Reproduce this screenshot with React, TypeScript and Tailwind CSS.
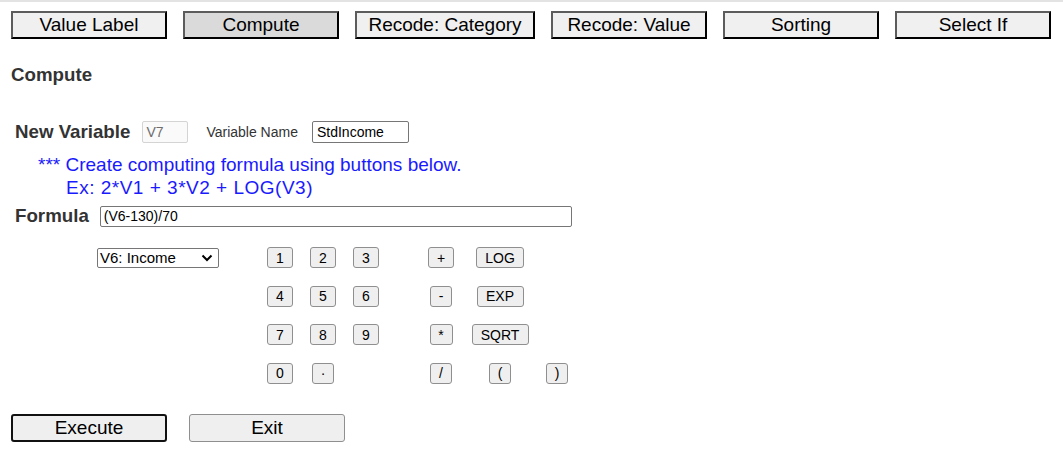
import React from "react";

const tabs = ["Value Label", "Compute", "Recode: Category", "Recode: Value", "Sorting", "Select If"];

function Key({ label, w }: { label: string; w: string }) {
  return (
    <button
      className={`${w} h-[21px] border border-[#8f8f8f] bg-[#efefef] rounded-[3px] text-[14px] leading-none text-black flex items-center justify-center`}
    >
      {label}
    </button>
  );
}

export default function App() {
  const rows: { label: string; w: string }[][] = [
    [
      { label: "1", w: "w-[26px]" },
      { label: "2", w: "w-[26px]" },
      { label: "3", w: "w-[26px]" },
      { label: "+", w: "w-[26px]" },
      { label: "LOG", w: "w-[48px]" },
      { label: "", w: "" },
    ],
    [
      { label: "4", w: "w-[26px]" },
      { label: "5", w: "w-[26px]" },
      { label: "6", w: "w-[26px]" },
      { label: "-", w: "w-[22px]" },
      { label: "EXP", w: "w-[47px]" },
      { label: "", w: "" },
    ],
    [
      { label: "7", w: "w-[26px]" },
      { label: "8", w: "w-[26px]" },
      { label: "9", w: "w-[26px]" },
      { label: "*", w: "w-[23px]" },
      { label: "SQRT", w: "w-[57px]" },
      { label: "", w: "" },
    ],
    [
      { label: "0", w: "w-[26px]" },
      { label: "·", w: "w-[22px]" },
      { label: "", w: "" },
      { label: "/", w: "w-[22px]" },
      { label: "(", w: "w-[22px]" },
      { label: ")", w: "w-[22px]" },
    ],
  ];

  return (
    <div className="w-[1063px] h-[452px] bg-white text-black font-['Liberation_Sans',Arial,sans-serif] overflow-hidden">
      <div className="h-[2px] bg-[#e3e3e3]" />
      <div className="flex gap-4 pl-[11px] pt-[9px]">
        {tabs.map((t) => (
          <button
            key={t}
            className={`${t === "Recode: Category" ? "w-[180px]" : "w-[156px]"} h-[28px] border-2 border-t-[#5c5c5c] border-l-[#5c5c5c] border-r-black border-b-black ${
              t === "Compute" ? "bg-[#dadada]" : "bg-[#f0f0f0]"
            } text-[19px] leading-none text-black flex items-center justify-center pb-[1px]`}
          >
            {t}
          </button>
        ))}
      </div>

      <h3 className="mt-[25px] pl-[11px] text-[18.72px] leading-[22px] font-bold text-[#333]">Compute</h3>

      <div className="mt-[35px] pl-[15px] flex items-center h-[22px]">
        <span className="text-[18.72px] font-bold text-[#333]">New Variable</span>
        <div className="ml-[12px] w-[46px] h-[22px] border border-[#d4d4d4] bg-[#fafafa] rounded-[2px] text-[14px] text-[#6d6d6d] flex items-center pl-[3px]">
          V7
        </div>
        <span className="ml-[18px] text-[14px] text-[#333]">Variable Name</span>
        <div className="ml-[14px] w-[97px] h-[22px] border border-[#767676] rounded-[2px] text-[14px] text-black flex items-center pl-[4px]">
          StdIncome
        </div>
      </div>

      <div className="mt-[10px] pl-[38px] text-[19px] leading-[23px] text-[#1a1aff]">
        *** Create computing formula using buttons below.
      </div>
      <div className="pl-[66px] text-[19px] leading-[23px] tracking-[0.5px] text-[#1a1aff]">Ex: 2*V1 + 3*V2 + LOG(V3)</div>

      <div className="mt-[6px] pl-[15px] flex items-center h-[22px]">
        <span className="text-[18.72px] font-bold text-[#333]">Formula</span>
        <div className="ml-[11px] w-[472px] h-[21px] border border-[#767676] rounded-[2px] text-[14px] text-black flex items-center pl-[3px]">
          (V6-130)/70
        </div>
      </div>

      <div className="mt-[20px] pl-[97px] flex items-start">
        <div className="w-[161px] pt-[1px]">
          <div className="w-[122px] h-[20px] border border-[#767676] rounded-[2px] flex items-center justify-between pl-[2px] pr-[5px] text-[15px] text-black">
            <span>V6: Income</span>
            <svg width="12" height="8" viewBox="0 0 12 8">
              <path d="M1.5 1.5 L6 6 L10.5 1.5" fill="none" stroke="black" strokeWidth="2" />
            </svg>
          </div>
        </div>
        <div className="grid grid-cols-[44px_42px_44px_24px_58px_60px_54px] gap-y-[17.5px]">
          {rows.map((r, i) => (
            <React.Fragment key={i}>
              {r.slice(0, 3).map((k, j) => (
                <div key={j} className="flex justify-center">
                  {k.label ? <Key label={k.label} w={k.w} /> : null}
                </div>
              ))}
              <div />
              {r.slice(3).map((k, j) => (
                <div key={j + 3} className="flex justify-center">
                  {k.label ? <Key label={k.label} w={k.w} /> : null}
                </div>
              ))}
            </React.Fragment>
          ))}
        </div>
      </div>

      <div className="mt-[30px] pl-[11px] flex gap-[22px]">
        <button className="w-[156px] h-[28px] border-2 border-[#111] rounded-[3px] bg-[#efefef] text-[19px] leading-none text-black flex items-center justify-center">
          Execute
        </button>
        <button className="w-[156px] h-[28px] border border-[#8f8f8f] rounded-[3px] bg-[#efefef] text-[19px] leading-none text-black flex items-center justify-center">
          Exit
        </button>
      </div>
    </div>
  );
}
